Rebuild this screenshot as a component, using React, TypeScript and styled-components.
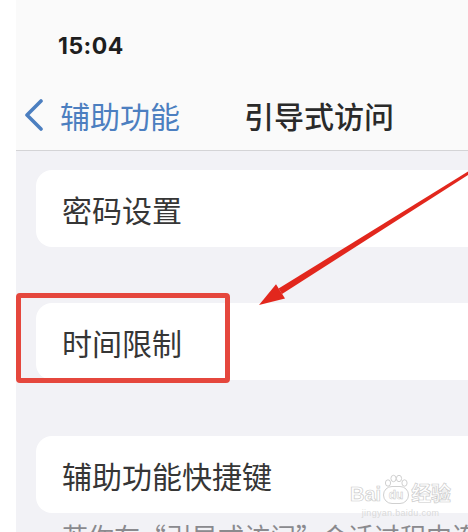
import React from 'react';
import styled, { createGlobalStyle } from 'styled-components';

const GlobalStyle = createGlobalStyle`
  html, body {
    margin: 0;
    padding: 0;
    background: #ffffff;
    overflow: hidden;
  }

  * {
    box-sizing: border-box;
  }
`;

const ROWS = ['密码设置', '时间限制', '辅助功能快捷键'];

const App: React.FC = () => {
  return (
    <>
      <GlobalStyle />
      <Page>
        <Screen>
          <Header>
            <StatusBar>
              <Clock>15:04</Clock>
            </StatusBar>
            <NavBar>
              <BackButton>
                <svg width="20" height="32" viewBox="0 0 20 32">
                  <polyline
                    points="17,2 3,16 17,30"
                    fill="none"
                    stroke="#4c7fc0"
                    strokeWidth="3.6"
                    strokeLinecap="round"
                    strokeLinejoin="round"
                  />
                </svg>
                <BackLabel>辅助功能</BackLabel>
              </BackButton>
              <Title>引导式访问</Title>
            </NavBar>
          </Header>

          <Content>
            <CardList>
              {ROWS.map((label, index) => (
                <Card key={label}>
                  {label}
                  {index === 1 && <Highlight />}
                </Card>
              ))}
            </CardList>
            <Footnote>若你在“引导式访问”会话过程中连按三次侧边按钮</Footnote>
          </Content>
        </Screen>

        <ArrowLayer width="468" height="532" viewBox="0 0 468 532">
          <polygon
            points="282.0,294.0 278.6,288.5 469.3,170.8 470.7,173.2"
            fill="#e2271d"
          />
          <polygon points="259,305 285.0,298.5 276.0,284.2" fill="#e2271d" />
        </ArrowLayer>

        <Watermark>
          <WatermarkLogo>
            <span>Bai</span>
            <Paw>
              <svg width="26" height="14" viewBox="0 0 26 14">
                <g fill="none" stroke="#d0d0d0" strokeWidth="1">
                  <ellipse cx="5" cy="9" rx="2.6" ry="3.2" />
                  <ellipse cx="10.5" cy="4.5" rx="2.6" ry="3.2" />
                  <ellipse cx="16" cy="4.5" rx="2.6" ry="3.2" />
                  <ellipse cx="21.5" cy="9" rx="2.6" ry="3.2" />
                </g>
              </svg>
              <DuBadge>du</DuBadge>
            </Paw>
            <span>经验</span>
          </WatermarkLogo>
          <WatermarkUrl>jingyan.baidu.com</WatermarkUrl>
        </Watermark>
      </Page>
    </>
  );
};

export default App;

const Page = styled.div`
  position: relative;
  width: 468px;
  height: 532px;
  padding-left: 16px;
  overflow: hidden;
  font-family: 'Noto Sans CJK SC', 'Noto Sans', sans-serif;
`;

const Screen = styled.div`
  display: flex;
  flex-direction: column;
  width: 480px;
  height: 532px;
  background: #f2f2f6;
`;

const Header = styled.div`
  background: #fafafa;
  border-bottom: 1px solid #d4d4d6;
`;

const StatusBar = styled.div`
  display: flex;
  align-items: center;
  height: 80px;
  padding: 12px 0 0 42px;
`;

const Clock = styled.span`
  font-family: Inter, 'Liberation Sans', sans-serif;
  font-size: 23px;
  font-weight: 700;
  color: #1e1e1e;
  letter-spacing: 0.5px;
`;

const NavBar = styled.div`
  display: flex;
  align-items: center;
  gap: 64px;
  height: 70px;
  padding-left: 8px;
`;

const BackButton = styled.div`
  display: flex;
  align-items: center;
  gap: 16px;

  svg {
    display: block;
  }
`;

const BackLabel = styled.span`
  font-size: 30px;
  color: #4c7fc0;
  line-height: 1;
`;

const Title = styled.span`
  font-size: 30px;
  font-weight: 500;
  color: #2a2a2a;
  line-height: 1;
`;

const Content = styled.div`
  display: flex;
  flex-direction: column;
  padding: 19px 0 0 20px;
`;

const CardList = styled.div`
  display: flex;
  flex-direction: column;
  gap: 56px;
`;

const Card = styled.div`
  position: relative;
  display: flex;
  align-items: center;
  height: 77px;
  padding-left: 26px;
  background: #ffffff;
  border-radius: 16px;
  font-size: 30px;
  color: #363636;
`;

const Highlight = styled.div`
  position: absolute;
  left: -20px;
  top: -10px;
  width: 214px;
  height: 90px;
  border: 5px solid #e5473d;
  border-radius: 4px;
  pointer-events: none;
`;

const Footnote = styled.div`
  margin-top: 6px;
  padding-left: 26px;
  font-size: 26px;
  line-height: 34px;
  color: #8a8a8e;
  white-space: nowrap;
`;

const ArrowLayer = styled.svg`
  position: absolute;
  left: 0;
  top: 0;
  pointer-events: none;
`;

const Watermark = styled.div`
  position: absolute;
  left: 350px;
  top: 474px;
  display: flex;
  flex-direction: column;
  align-items: center;
  pointer-events: none;
`;

const WatermarkLogo = styled.div`
  display: flex;
  align-items: flex-end;
  gap: 2px;
  font-family: 'Liberation Sans', 'Noto Sans CJK SC', sans-serif;
  font-size: 20px;
  font-weight: 700;
  color: #ffffff;
  -webkit-text-stroke: 0.7px #cccccc;
  line-height: 1;
`;

const Paw = styled.span`
  display: flex;
  flex-direction: column;
  align-items: center;

  svg {
    display: block;
    margin-bottom: -2px;
  }
`;

const DuBadge = styled.span`
  display: flex;
  align-items: center;
  justify-content: center;
  width: 26px;
  height: 18px;
  border: 1px solid #d0d0d0;
  border-radius: 9px;
  font-size: 12px;
  -webkit-text-stroke: 0.5px #c8c8c8;
`;

const WatermarkUrl = styled.div`
  margin-top: 4px;
  font-family: 'Liberation Sans', sans-serif;
  font-size: 9px;
  color: #dadada;
  letter-spacing: 0.3px;
`;
